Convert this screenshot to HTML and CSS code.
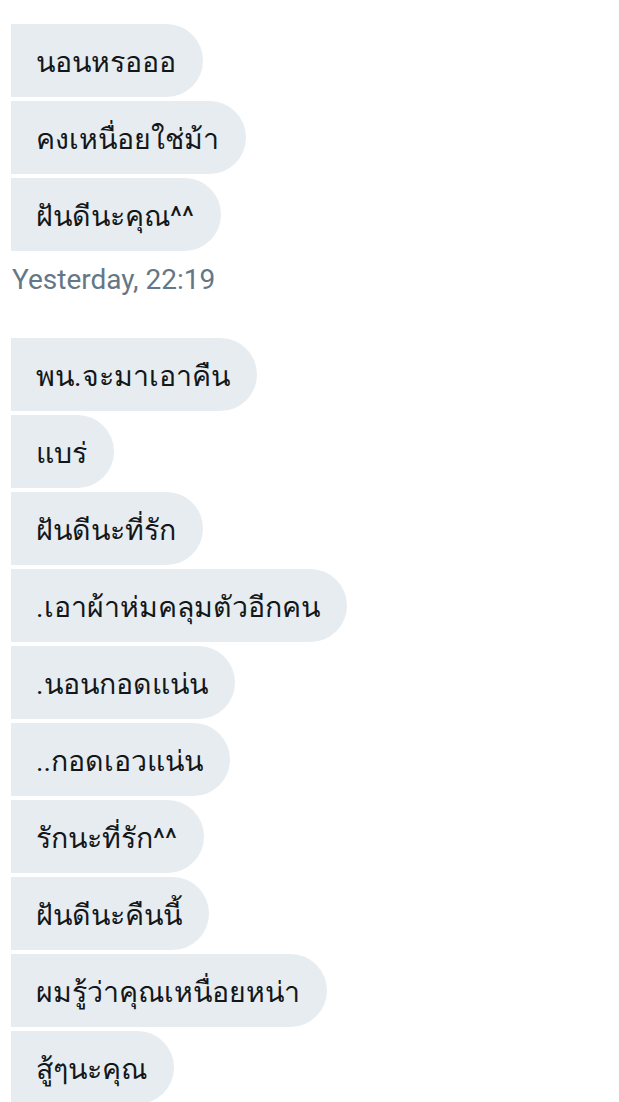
FILE: index.html
```html
<!DOCTYPE html>
<html lang="th">
<head>
<meta charset="utf-8">
<link rel="stylesheet" href="styles.css">
</head>
<body>
<div class="chat">
  <div class="group">
    <div class="bubble">นอนหรอออ</div>
    <div class="bubble">คงเหนื่อยใช่ม้า</div>
    <div class="bubble">ฝันดีนะคุณ^^</div>
  </div>
  <div class="stamp">Yesterday, 22:19</div>
  <div class="group">
    <div class="bubble">พน.จะมาเอาคืน</div>
    <div class="bubble">แบร่</div>
    <div class="bubble">ฝันดีนะที่รัก</div>
    <div class="bubble">.เอาผ้าห่มคลุมตัวอีกคน</div>
    <div class="bubble">.นอนกอดแน่น</div>
    <div class="bubble">..กอดเอวแน่น</div>
    <div class="bubble">รักนะที่รัก^^</div>
    <div class="bubble">ฝันดีนะคืนนี้</div>
    <div class="bubble">ผมรู้ว่าคุณเหนื่อยหน่า</div>
    <div class="bubble">สู้ๆนะคุณ</div>
  </div>
</div>
</body>
</html>
```
FILE: styles.css
```css
html, body {
  margin: 0;
  padding: 0;
  background: #ffffff;
}
.chat {
  padding: 24px 0 0 11px;
  font-family: Roboto, "Noto Sans", "DejaVu Sans", sans-serif;
}
.group {
  display: flex;
  flex-direction: column;
  align-items: flex-start;
  gap: 4px;
}
.bubble {
  background: #e6ecf0;
  color: #14171a;
  font-size: 28.5px;
  height: 73px;
  box-sizing: border-box;
  line-height: 69px;
  padding: 4px 27px 0 25px;
  border-radius: 0 37px 37px 0;
  white-space: nowrap;
}
.stamp {
  color: #657786;
  font-size: 28px;
  line-height: 30px;
  padding: 14px 0 43px 1px;
}
```
